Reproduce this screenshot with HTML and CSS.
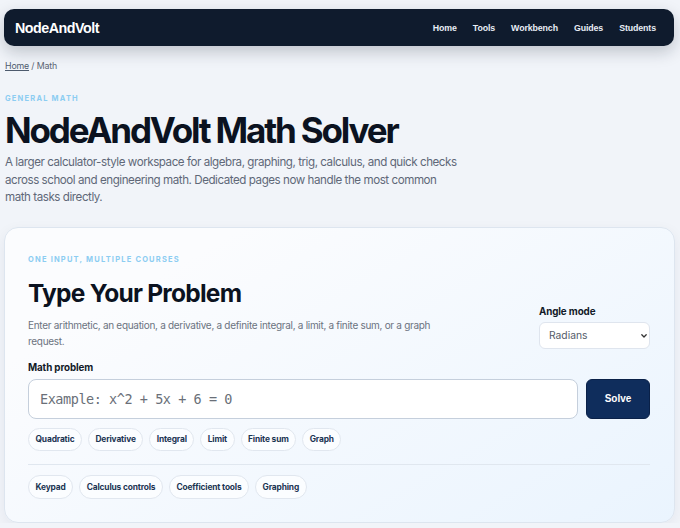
FILE: index.html
```html
<!DOCTYPE html>
<html lang="en">
<head>
  <meta charset="UTF-8" />
  <meta name="viewport" content="width=device-width, initial-scale=1.0"/>
  <title>NodeAndVolt Math Solver</title>
  <link rel="stylesheet" href="styles.css">
</head>
<body>

  <header class="topbar">
    <a class="brand" href="#">NodeAndVolt</a>
    <nav class="nav">
      <a href="#">Home</a>
      <a href="#">Tools</a>
      <a href="#">Workbench</a>
      <a href="#">Guides</a>
      <a href="#">Students</a>
    </nav>
  </header>

  <main class="page">
    <div class="crumbs"><a href="#">Home</a> / Math</div>

    <section class="hero">
      <div class="eyebrow">General math</div>
      <h1 class="title">NodeAndVolt Math Solver</h1>
      <p class="lead">A larger calculator-style workspace for algebra, graphing, trig, calculus, and quick checks across school and engineering math. Dedicated pages now handle the most common math tasks directly.</p>
    </section>

    <section class="card">
      <div class="eyebrow">One input, multiple courses</div>

      <div class="card-head">
        <div class="card-intro">
          <h2 class="card-title">Type Your Problem</h2>
          <p class="card-text">Enter arithmetic, an equation, a derivative, a definite integral, a limit, a finite sum, or a graph request.</p>
        </div>
        <label class="angle">
          <span class="field-label">Angle mode</span>
          <span class="select-wrap">
            <select class="select">
              <option>Radians</option>
              <option>Degrees</option>
            </select>
            <svg class="chev" width="8" height="6" viewBox="0 0 8 6"><path d="M1.8 1.8 4 4 6.2 1.8" fill="none" stroke="#333" stroke-width="1.3" stroke-linecap="round" stroke-linejoin="round"/></svg>
          </span>
        </label>
      </div>

      <div class="field-label">Math problem</div>
      <div class="solve-row">
        <input class="problem" type="text" placeholder="Example: x^2 + 5x + 6 = 0" />
        <button class="solve">Solve</button>
      </div>

      <div class="chips">
        <button class="chip">Quadratic</button>
        <button class="chip">Derivative</button>
        <button class="chip">Integral</button>
        <button class="chip">Limit</button>
        <button class="chip">Finite sum</button>
        <button class="chip">Graph</button>
      </div>

      <hr class="divider" />

      <div class="chips panels">
        <button class="chip">Keypad</button>
        <button class="chip">Calculus controls</button>
        <button class="chip">Coefficient tools</button>
        <button class="chip">Graphing</button>
      </div>
    </section>
  </main>

</body>
</html>
```

FILE: styles.css
```css
body {
  margin: 0;
  font-family: Inter, 'Noto Sans', sans-serif;
  background: #f1f4f9;
  color: #0b1220;
}

.topbar {
  margin: 9px 6px 0 4px;
  height: 37px;
  padding: 0 18px 0 11px;
  background: #0f1b2d;
  border-radius: 10px;
  display: flex;
  align-items: center;
  justify-content: space-between;
  box-shadow: 0 6px 16px rgba(15, 27, 45, 0.22);
}

.brand {
  font-family: 'Liberation Sans', Arial, sans-serif;
  font-weight: bold;
  font-size: 14.3px;
  letter-spacing: -0.5px;
  color: #fff;
  text-decoration: none;
}

.nav {
  display: flex;
  gap: 16px;
}

.nav a {
  font-family: 'Liberation Sans', Arial, sans-serif;
  font-weight: bold;
  font-size: 8.8px;
  letter-spacing: -0.1px;
  color: #e8edf5;
  text-decoration: none;
}

.page {
  padding: 0 5px 0 4px;
}

.crumbs {
  margin-top: 14px;
  padding-left: 1px;
  font-size: 8.8px;
  letter-spacing: -0.15px;
  color: #5b6473;
}

.crumbs a {
  color: #4d5a6d;
}

.hero {
  padding: 23px 1px 0;
}

.eyebrow {
  font-size: 7.5px;
  font-weight: 700;
  letter-spacing: 1.2px;
  text-transform: uppercase;
  color: #8ccdf2;
}

.title {
  margin: 5px 0 0;
  font-size: 35px;
  font-weight: 700;
  letter-spacing: -2.15px;
  line-height: 44px;
}

.lead {
  margin: 2px 0 0;
  max-width: 452px;
  font-size: 11.6px;
  letter-spacing: -0.45px;
  line-height: 17.5px;
  color: #5f6878;
}

.card {
  margin-top: 20px;
  padding: 27px 24px 23px 23px;
  border: 1px solid #dde5ef;
  border-radius: 14px;
  background: linear-gradient(150deg, #fbfcfe 20%, #eaf4fe 100%);
  box-shadow: 0 4px 14px rgba(20, 40, 70, 0.06);
}

.card-head {
  display: flex;
  justify-content: space-between;
  align-items: flex-end;
}

.card-title {
  margin: 14px 0 0;
  font-size: 24.5px;
  font-weight: 700;
  letter-spacing: -0.75px;
  line-height: 30px;
}

.card-text {
  margin: 9px 0 0;
  max-width: 420px;
  font-size: 10px;
  letter-spacing: -0.3px;
  line-height: 16px;
  color: #6b7380;
}

.angle {
  display: flex;
  flex-direction: column;
  gap: 5px;
  width: 111px;
}

.field-label {
  font-size: 9.8px;
  font-weight: 700;
  letter-spacing: -0.1px;
  color: #121a28;
}

.select-wrap {
  position: relative;
}

.select {
  width: 111px;
  height: 27px;
  padding: 0 9px;
  border: 1px solid #dfe5ee;
  border-radius: 6px;
  background: #fff;
  font-family: inherit;
  font-size: 10.3px;
  color: #545c69;
  appearance: none;
}

.chev {
  position: absolute;
  right: 2px;
  top: 11px;
  pointer-events: none;
}

.card > .field-label {
  margin-top: 13px;
}

.solve-row {
  display: flex;
  gap: 8px;
  margin-top: 6px;
}

.problem {
  flex: 1;
  height: 40px;
  box-sizing: border-box;
  padding: 0 11px;
  border: 1px solid #c5cfdc;
  border-radius: 8px;
  background: #fff;
  font-family: 'DejaVu Sans Mono', 'Liberation Mono', monospace;
  font-size: 13.5px;
  letter-spacing: -0.45px;
}

.problem::placeholder {
  color: #6a6f78;
}

.solve {
  width: 64px;
  height: 40px;
  border: 1px solid #0a2148;
  border-radius: 6px;
  background: #0f2d5c;
  color: #fff;
  font-family: 'Liberation Sans', Arial, sans-serif;
  font-weight: bold;
  font-size: 10px;
}

.chips {
  display: flex;
  gap: 6px;
  margin-top: 9px;
}

.chip {
  height: 23px;
  padding: 0 6.5px;
  border: 1px solid #e1e7ef;
  border-radius: 12px;
  background: #fbfdff;
  font-family: inherit;
  font-size: 8.4px;
  font-weight: 700;
  letter-spacing: -0.15px;
  color: #1c3553;
}

.panels {
  margin-top: 10px;
}

.panels .chip {
  height: 24px;
}

.divider {
  margin: 13px 0 0;
  border: none;
  border-top: 1px solid #e0e7ef;
}
```
